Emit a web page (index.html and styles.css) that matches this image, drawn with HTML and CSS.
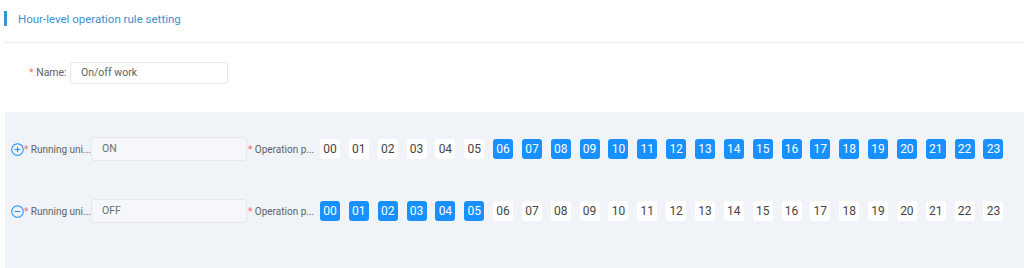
FILE: index.html
```html
<!DOCTYPE html>
<html lang="en">
<head>
    <meta charset="UTF-8">
    <title>Hour-level operation rule setting</title>
    <link rel="stylesheet" href="styles.css">
</head>
<body>
    <div class="header">
        <span class="title">Hour-level operation rule setting</span>
    </div>

    <div class="name-row">
        <label class="label"><span class="req">*</span> Name:</label>
        <div class="input name-input">On/off work</div>
    </div>

    <div class="panel">
        <!-- ON rule -->
        <div class="rule-row">
            <svg class="icon" viewBox="0 0 14 14" width="13" height="13">
                <circle cx="7" cy="7" r="6.2" fill="none" stroke="#1890ff" stroke-width="1.1"/>
                <path d="M4 7h6M7 4v6" stroke="#1890ff" stroke-width="1.1"/>
            </svg>
            <span class="rule-label"><span class="req">*</span> Running uni...</span>
            <div class="input disabled">ON</div>
            <span class="op-label"><span class="req">*</span> Operation p...</span>
            <div class="hours" id="hoursOn"></div>
        </div>

        <!-- OFF rule -->
        <div class="rule-row">
            <svg class="icon" viewBox="0 0 14 14" width="13" height="13">
                <circle cx="7" cy="7" r="6.2" fill="none" stroke="#1890ff" stroke-width="1.1"/>
                <path d="M4 7h6" stroke="#1890ff" stroke-width="1.1"/>
            </svg>
            <span class="rule-label"><span class="req">*</span> Running uni...</span>
            <div class="input disabled">OFF</div>
            <span class="op-label"><span class="req">*</span> Operation p...</span>
            <div class="hours" id="hoursOff"></div>
        </div>
    </div>

    <script>
        // build the 24 hour chips, ON uses 06-23, OFF uses 00-05
        function fillHours(id, isActive) {
            const box = document.getElementById(id);
            for (let h = 0; h < 24; h++) {
                const chip = document.createElement("span");
                chip.className = "hour" + (isActive(h) ? " active" : "");
                chip.textContent = String(h).padStart(2, "0");
                box.appendChild(chip);
            }
        }
        fillHours("hoursOn", h => h >= 6);
        fillHours("hoursOff", h => h < 6);
    </script>
</body>
</html>
```

FILE: styles.css
```css
body {
    margin: 0;
    background-color: #fff;
    font-family: Roboto, "Noto Sans", Arial, sans-serif;
    color: #606266;
    height: 268px;
    overflow: hidden;
}

/* page title */
.header {
    margin-left: 4px;
    height: 43px;
    border-bottom: 1px solid #ebeef2;
    padding-top: 8px;
    box-sizing: border-box;
}
.title {
    display: inline-block;
    border-left: 3px solid #3a95d6;
    padding-left: 11px;
    height: 15px;
    line-height: 16px;
    font-size: 11.5px;
    color: #3f8fcf;
}

/* name field */
.name-row {
    display: flex;
    align-items: flex-start;
    padding: 19px 0 0 29px;
    height: 69px;
    box-sizing: border-box;
}
.label {
    font-size: 10.5px;
    color: #606266;
    line-height: 22px;
    width: 41px;
}
.req {
    color: #f56c6c;
}
.input {
    box-sizing: border-box;
    border: 1px solid #e4e7ed;
    border-radius: 3px;
    background-color: #fff;
    font-size: 10.5px;
    padding-left: 10px;
    color: #606266;
}
.name-input {
    width: 158px;
    height: 22px;
    line-height: 20px;
}

/* rule panel */
.panel {
    margin-left: 5px;
    background-color: #f0f3f8;
    height: 160px;
    padding-top: 25px;
    box-sizing: border-box;
}
.rule-row {
    display: flex;
    align-items: center;
    height: 24px;
    margin-bottom: 38px;
    padding-left: 6px;
}
.icon {
    flex-shrink: 0;
}
.rule-label, .op-label {
    font-size: 10px;
    color: #606266;
    white-space: nowrap;
    flex-shrink: 0;
}
.rule-label {
    width: 67px;
}
.input.disabled {
    width: 156px;
    height: 24px;
    line-height: 22px;
    background-color: #f5f7fa;
    color: #6b6e73;
    margin-right: 1px;
    flex-shrink: 0;
}
.op-label {
    width: 72px;
}

/* hour chips */
.hours {
    display: flex;
    gap: 8.85px;
}
.hour {
    width: 20px;
    height: 20px;
    line-height: 20px;
    text-align: center;
    font-size: 12px;
    border-radius: 3px;
    background-color: #fff;
    color: #444;
}
.hour.active {
    background-color: #1890ff;
    color: #fff;
}
```
